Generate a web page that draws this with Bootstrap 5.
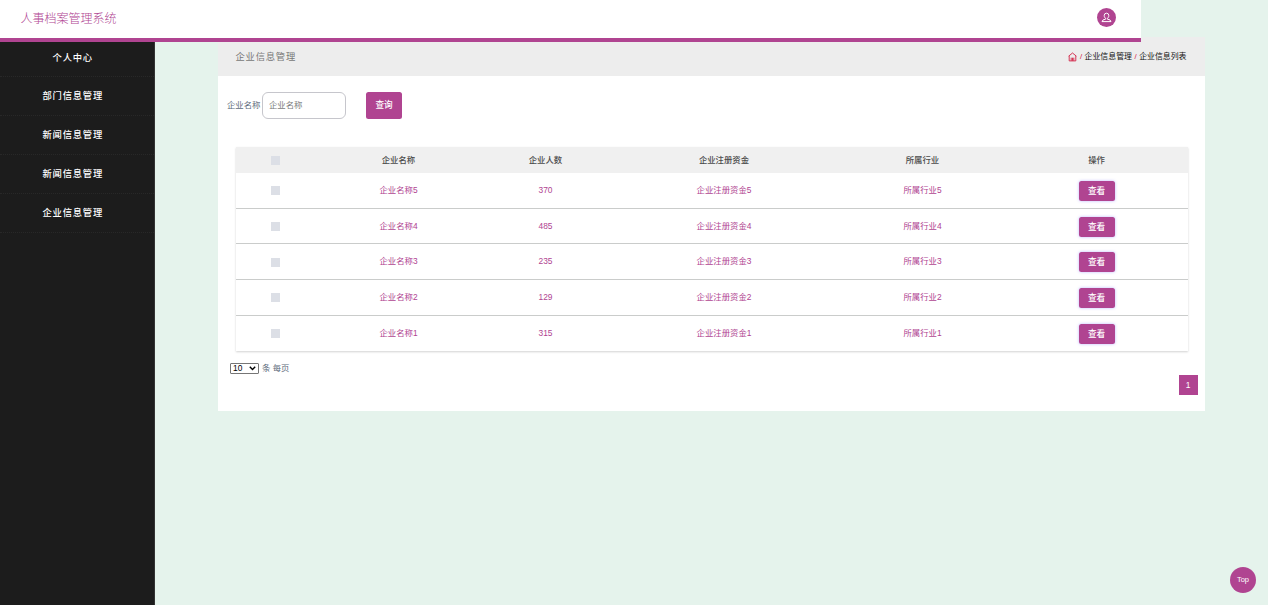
<!DOCTYPE html>
<html lang="zh-CN">
<head>
<meta charset="utf-8">
<title>人事档案管理系统</title>
<meta name="viewport" content="width=device-width, initial-scale=1">
<link href="https://cdn.jsdelivr.net/npm/bootstrap@5.3.0/dist/css/bootstrap.min.css" rel="stylesheet">
<style>
:root{--brand:#b04491}
body{background:#e5f3ec;font-family:"Liberation Sans","Noto Sans CJK SC",sans-serif;font-size:8.4px;line-height:12px;color:#5d6b7b}
.topbar{width:1141px;height:41.5px;border-bottom:4px solid var(--brand);padding:0 25px 2px 20.5px;z-index:2}
.topbar .title{color:var(--brand);font-size:12px;line-height:16px;font-weight:300;padding-top:2px}
.avatar{width:19px;height:19px;background:var(--brand)}
.sidebar{width:154.5px;background:#1c1c1c;border-right:1px solid #333;padding-right:8px}
.sidebar .nav-link{height:39px;padding:0;color:#fff;font-size:9.3px;letter-spacing:.78px;font-weight:500;border-bottom:1px dotted #282828;margin-right:-8px;padding-right:8px}
.sidebar .nav-link:first-child{height:35.5px;padding-bottom:2px}
.panel{width:986.5px;height:374px;margin:-5px 0 0 63.5px}
.panel-head{height:39px;background:#ededed;padding:1px 18px 0 17.5px}
.panel-head h1{font-size:9.3px;letter-spacing:.78px;color:#777;line-height:12px;padding-top:1px}
.crumbs{font-size:7.9px;color:#111;gap:2.5px}
.crumbs i{color:#d22346;font-style:normal}
.searchbar{padding:16px 0 0 9px;height:71px}
.searchbar label{padding-top:7px}
.searchbar .form-control{width:83.5px;height:27px;margin:0 20.5px 0 1.5px;padding:0 6px;font-size:8.4px;border:1px solid #c6c6cc;border-radius:6px;color:#777}
.searchbar .form-control::placeholder{color:#7b7b7b}
.btn-brand,.btn-brand:hover{background:var(--brand);color:#fff;border:0;padding:0;font-size:8.6px;line-height:12px}
.searchbar .btn{width:36px;height:27px;border-radius:2.5px;font-weight:500}
.listing{width:952px;margin:0 0 0 17.5px;table-layout:fixed;text-align:center;box-shadow:0 1px 2px rgba(0,0,0,.18)}
.listing>:not(caption)>*>*{padding:0;vertical-align:middle;border:0}
.listing>thead>tr>th{height:26px;background:#f0f0f0;color:#4b4b4b;font-weight:500}
.listing>tbody>tr>td{height:35.7px;color:var(--brand);padding-bottom:1px}
.listing>tbody>tr:not(:last-child)>td{border-bottom:1px solid #cacccb}
.listing>tbody>tr>td:last-child{padding:1px 0 0}
.tick{display:block;width:9px;height:9px;margin:2px auto 0;background:#dcdfe6}
.listing .btn{width:36px;height:20px;border-radius:2.5px;font-weight:500;box-shadow:0 0 3px rgba(120,110,255,.5)}
.listing .btn,.page-now{vertical-align:middle}
.pager{padding:11px 0 0 12px}
.per-page{gap:3px;height:13px}
.per-page select{appearance:none;width:29px;height:11px;padding:0 0 0 2px;border:1px solid #767676;border-radius:1px;font-size:8.4px;line-height:9px;color:#000;background:#fff url("data:image/svg+xml,%3Csvg xmlns='http://www.w3.org/2000/svg' width='7' height='5' fill='none' stroke='%23000' stroke-width='1.4'%3E%3Cpath d='M.8.8 3.5 3.6 6.2.8'/%3E%3C/svg%3E") no-repeat right 2px center}
.page-now{width:19px;height:20px;background:var(--brand);margin:0 7px 0 auto}
.to-top{right:12px;bottom:12px;width:26px;height:26px;background:var(--brand);font-size:7.5px}
</style>
</head>
<body class="vh-100 overflow-hidden d-flex flex-column">
<header class="topbar bg-white position-relative d-flex align-items-center justify-content-between flex-shrink-0">
  <span class="title">人事档案管理系统</span>
  <span class="avatar rounded-circle d-flex align-items-center justify-content-center">
    <svg width="11" height="11" viewBox="0 0 11 11" fill="none" stroke="#fff"><path d="M3.2 3.6a2.3 2.4 0 0 1 4.6 0c0 1.3-.7 2.4-1.5 2.8v.7l2.6.8 1.1 1.7H1l1.1-1.7 2.6-.8v-.7c-.8-.4-1.5-1.5-1.5-2.8Z"/></svg>
  </span>
</header>
<div class="d-flex flex-grow-1">
  <nav class="sidebar nav flex-column flex-nowrap flex-shrink-0">
    <a class="nav-link d-flex align-items-center justify-content-center">个人中心</a>
    <a class="nav-link d-flex align-items-center justify-content-center">部门信息管理</a>
    <a class="nav-link d-flex align-items-center justify-content-center">新闻信息管理</a>
    <a class="nav-link d-flex align-items-center justify-content-center">新闻信息管理</a>
    <a class="nav-link d-flex align-items-center justify-content-center">企业信息管理</a>
  </nav>
  <main class="panel bg-white flex-shrink-0">
    <div class="panel-head d-flex align-items-center justify-content-between">
      <h1 class="m-0 fw-normal">企业信息管理</h1>
      <div class="crumbs d-flex align-items-center">
        <svg width="9" height="10" viewBox="0 0 9 10" fill="none" stroke="#d22346" stroke-width=".9"><path d="M.7 4.1 4.5 1l3.8 3.1M1.2 3.8v5.1h6.6V3.8M3.2 8.8V5.7M4.5 8.8V5.7M5.8 8.8V5.7"/></svg>
        <i>/</i><span>企业信息管理</span><i>/</i><span>企业信息列表</span>
      </div>
    </div>
    <form class="searchbar d-flex align-items-start">
      <label for="company">企业名称</label>
      <input class="form-control" id="company" placeholder="企业名称">
      <button class="btn btn-brand" type="button">查询</button>
    </form>
    <table class="table listing">
      <colgroup><col style="width:79px"><col style="width:168px"><col style="width:126px"><col style="width:231px"><col style="width:166px"><col style="width:182px"></colgroup>
      <thead><tr><th><span class="tick"></span></th><th>企业名称</th><th>企业人数</th><th>企业注册资金</th><th>所属行业</th><th>操作</th></tr></thead>
      <tbody>
        <tr><td><span class="tick"></span></td><td>企业名称5</td><td>370</td><td>企业注册资金5</td><td>所属行业5</td><td><button class="btn btn-brand">查看</button></td></tr>
        <tr><td><span class="tick"></span></td><td>企业名称4</td><td>485</td><td>企业注册资金4</td><td>所属行业4</td><td><button class="btn btn-brand">查看</button></td></tr>
        <tr><td><span class="tick"></span></td><td>企业名称3</td><td>235</td><td>企业注册资金3</td><td>所属行业3</td><td><button class="btn btn-brand">查看</button></td></tr>
        <tr><td><span class="tick"></span></td><td>企业名称2</td><td>129</td><td>企业注册资金2</td><td>所属行业2</td><td><button class="btn btn-brand">查看</button></td></tr>
        <tr><td><span class="tick"></span></td><td>企业名称1</td><td>315</td><td>企业注册资金1</td><td>所属行业1</td><td><button class="btn btn-brand">查看</button></td></tr>
      </tbody>
    </table>
    <div class="pager">
      <div class="per-page d-flex align-items-center"><select><option>10</option></select><span>条 每页</span></div>
      <div class="page-now text-white d-flex align-items-center justify-content-center">1</div>
    </div>
  </main>
</div>
<a class="to-top position-fixed rounded-circle text-white text-decoration-none d-flex align-items-center justify-content-center">Top</a>
<script src="https://cdn.jsdelivr.net/npm/bootstrap@5.3.0/dist/js/bootstrap.bundle.min.js"></script>
</body>
</html>
